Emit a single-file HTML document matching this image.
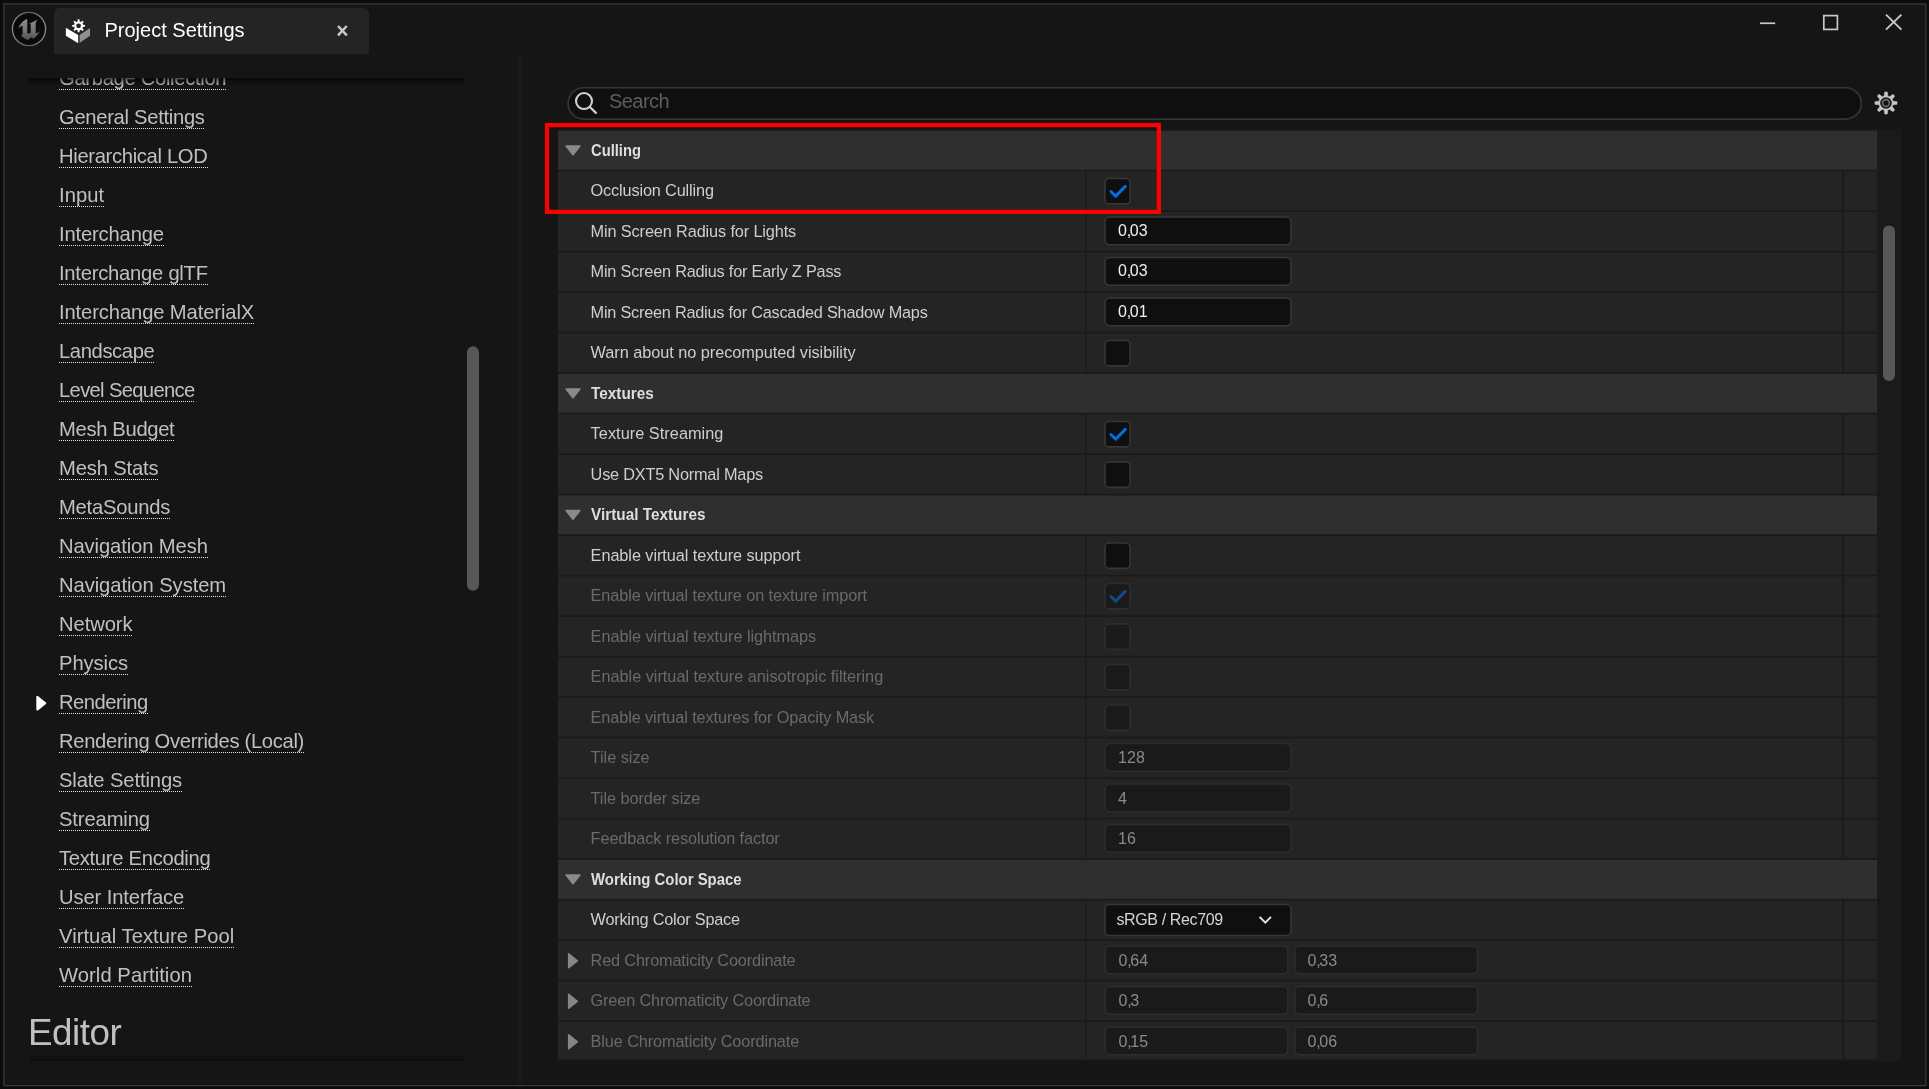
<!DOCTYPE html>
<html lang="en"><head><meta charset="utf-8"><title>Project Settings</title>
<style>
html,body{margin:0;padding:0;}
body{width:1929px;height:1089px;overflow:hidden;background:#0b0b0b;font-family:"Liberation Sans", Arial, sans-serif;position:relative;}
.abs{position:absolute;}
#win{position:absolute;left:3px;top:3px;width:1923.4px;height:1083.3px;background:#151515;}
#text{position:absolute;left:0;top:0;width:1929px;height:1089px;will-change:transform;}
#bg{position:absolute;left:0;top:0;width:1929px;height:1089px;}
#tab{position:absolute;left:54px;top:8px;width:315px;height:46px;background:#242424;border-radius:6px 6px 0 0;}
#tabtitle{position:absolute;left:104.5px;top:17px;font-size:20px;line-height:26px;color:#fff;white-space:nowrap;}
.side{position:absolute;left:29px;font-size:20.2px;line-height:26px;height:26px;color:#c0c0c0;white-space:nowrap;}
.side::after{content:'';position:absolute;left:0;right:0;top:24px;height:1px;background:repeating-linear-gradient(to right,#e6e6e6 0,#e6e6e6 1px,rgba(0,0,0,0) 1px,rgba(0,0,0,0) 2px);}
#sidebar{position:absolute;left:30px;top:78px;width:434px;height:930px;overflow:hidden;}
#editor{position:absolute;left:28.0px;top:1011px;font-size:36.8px;line-height:44px;color:#c0c0c0;white-space:nowrap;letter-spacing:-0.45px;}
#search{position:absolute;left:609px;top:87px;font-size:20px;line-height:28px;color:#5d5d5d;white-space:nowrap;letter-spacing:-0.55px;}
.nm{position:absolute;left:590.6px;font-size:16.3px;line-height:20px;height:20px;color:#cecece;white-space:nowrap;}
.nm.d{color:#6a6a6a;}
.hd{position:absolute;left:590.6px;transform-origin:0 50%;font-size:16.6px;line-height:20px;height:20px;color:#dedede;font-weight:700;white-space:nowrap;}
.val{position:absolute;font-size:16px;line-height:20px;height:20px;color:#f0f0f0;white-space:nowrap;letter-spacing:0.1px;}
.val.d{color:#8a8a8a;}
.val i{font-style:normal;letter-spacing:-1.5px;margin-left:-0.2px;}
.val.dd{color:#d6d6d6;letter-spacing:-0.38px;}
</style></head>
<body>
<div id="win"></div>
<svg id="bg" width="1929" height="1089" viewBox="0 0 1929 1089">
<defs>
<linearGradient id="ug" x1="0" y1="0" x2="0" y2="1"><stop offset="0" stop-color="#8c8e8e"/><stop offset="0.55" stop-color="#737575"/><stop offset="1" stop-color="#4e5050"/></linearGradient>
<linearGradient id="ring" x1="0" y1="0" x2="1" y2="0"><stop offset="0" stop-color="#8a8a8a"/><stop offset="0.5" stop-color="#5e5e5e"/><stop offset="1" stop-color="#8a8a8a"/></linearGradient>
<linearGradient id="shT" x1="0" y1="0" x2="0" y2="1"><stop offset="0" stop-color="#000" stop-opacity="0.6"/><stop offset="1" stop-color="#000" stop-opacity="0"/></linearGradient>
<linearGradient id="shB" x1="0" y1="0" x2="0" y2="1"><stop offset="0" stop-color="#000" stop-opacity="0"/><stop offset="1" stop-color="#000" stop-opacity="0.45"/></linearGradient>
</defs>
<path d="M3 3 H1926.5 V5 H5 V1086.3 H3Z" fill="#2b2b2b"/><path d="M1925.3 5 H1926.5 V1086.3 H5 V1085.1 H1925.3Z" fill="#393939"/>
<rect x="518" y="54" width="4" height="1030" fill="#1a1a1a"/>
<rect x="558" y="129" width="1343" height="932" fill="#1a1a1a"/>
<rect x="558" y="131" width="1319" height="38.8" fill="#2f2f2f"/>
<rect x="558" y="171.5" width="527.2" height="38.8" fill="#242424"/>
<rect x="1086.3" y="171.5" width="756" height="38.8" fill="#242424"/>
<rect x="1844" y="171.5" width="33" height="38.8" fill="#242424"/>
<rect x="558" y="212" width="527.2" height="38.8" fill="#242424"/>
<rect x="1086.3" y="212" width="756" height="38.8" fill="#242424"/>
<rect x="1844" y="212" width="33" height="38.8" fill="#242424"/>
<rect x="558" y="252.5" width="527.2" height="38.8" fill="#242424"/>
<rect x="1086.3" y="252.5" width="756" height="38.8" fill="#242424"/>
<rect x="1844" y="252.5" width="33" height="38.8" fill="#242424"/>
<rect x="558" y="293" width="527.2" height="38.8" fill="#242424"/>
<rect x="1086.3" y="293" width="756" height="38.8" fill="#242424"/>
<rect x="1844" y="293" width="33" height="38.8" fill="#242424"/>
<rect x="558" y="333.5" width="527.2" height="38.8" fill="#242424"/>
<rect x="1086.3" y="333.5" width="756" height="38.8" fill="#242424"/>
<rect x="1844" y="333.5" width="33" height="38.8" fill="#242424"/>
<rect x="558" y="374" width="1319" height="38.8" fill="#2f2f2f"/>
<rect x="558" y="414.5" width="527.2" height="38.8" fill="#242424"/>
<rect x="1086.3" y="414.5" width="756" height="38.8" fill="#242424"/>
<rect x="1844" y="414.5" width="33" height="38.8" fill="#242424"/>
<rect x="558" y="455" width="527.2" height="38.8" fill="#242424"/>
<rect x="1086.3" y="455" width="756" height="38.8" fill="#242424"/>
<rect x="1844" y="455" width="33" height="38.8" fill="#242424"/>
<rect x="558" y="495.5" width="1319" height="38.8" fill="#2f2f2f"/>
<rect x="558" y="536" width="527.2" height="38.8" fill="#242424"/>
<rect x="1086.3" y="536" width="756" height="38.8" fill="#242424"/>
<rect x="1844" y="536" width="33" height="38.8" fill="#242424"/>
<rect x="558" y="576.5" width="527.2" height="38.8" fill="#242424"/>
<rect x="1086.3" y="576.5" width="756" height="38.8" fill="#242424"/>
<rect x="1844" y="576.5" width="33" height="38.8" fill="#242424"/>
<rect x="558" y="617" width="527.2" height="38.8" fill="#242424"/>
<rect x="1086.3" y="617" width="756" height="38.8" fill="#242424"/>
<rect x="1844" y="617" width="33" height="38.8" fill="#242424"/>
<rect x="558" y="657.5" width="527.2" height="38.8" fill="#242424"/>
<rect x="1086.3" y="657.5" width="756" height="38.8" fill="#242424"/>
<rect x="1844" y="657.5" width="33" height="38.8" fill="#242424"/>
<rect x="558" y="698" width="527.2" height="38.8" fill="#242424"/>
<rect x="1086.3" y="698" width="756" height="38.8" fill="#242424"/>
<rect x="1844" y="698" width="33" height="38.8" fill="#242424"/>
<rect x="558" y="738.5" width="527.2" height="38.8" fill="#242424"/>
<rect x="1086.3" y="738.5" width="756" height="38.8" fill="#242424"/>
<rect x="1844" y="738.5" width="33" height="38.8" fill="#242424"/>
<rect x="558" y="779" width="527.2" height="38.8" fill="#242424"/>
<rect x="1086.3" y="779" width="756" height="38.8" fill="#242424"/>
<rect x="1844" y="779" width="33" height="38.8" fill="#242424"/>
<rect x="558" y="819.5" width="527.2" height="38.8" fill="#242424"/>
<rect x="1086.3" y="819.5" width="756" height="38.8" fill="#242424"/>
<rect x="1844" y="819.5" width="33" height="38.8" fill="#242424"/>
<rect x="558" y="860" width="1319" height="38.8" fill="#2f2f2f"/>
<rect x="558" y="900.5" width="527.2" height="38.8" fill="#242424"/>
<rect x="1086.3" y="900.5" width="756" height="38.8" fill="#242424"/>
<rect x="1844" y="900.5" width="33" height="38.8" fill="#242424"/>
<rect x="558" y="941" width="527.2" height="38.8" fill="#242424"/>
<rect x="1086.3" y="941" width="756" height="38.8" fill="#242424"/>
<rect x="1844" y="941" width="33" height="38.8" fill="#242424"/>
<rect x="558" y="981.5" width="527.2" height="38.8" fill="#242424"/>
<rect x="1086.3" y="981.5" width="756" height="38.8" fill="#242424"/>
<rect x="1844" y="981.5" width="33" height="38.8" fill="#242424"/>
<rect x="558" y="1022" width="527.2" height="37" fill="#242424"/>
<rect x="1086.3" y="1022" width="756" height="37" fill="#242424"/>
<rect x="1844" y="1022" width="33" height="37" fill="#242424"/>
<path d="M566.10 146.10 L579.90 146.10 L573.00 154.70Z" fill="#8a8a8a" stroke="#8a8a8a" stroke-width="1.6" stroke-linejoin="round"/>
<path d="M566.10 389.10 L579.90 389.10 L573.00 397.70Z" fill="#8a8a8a" stroke="#8a8a8a" stroke-width="1.6" stroke-linejoin="round"/>
<path d="M566.10 510.60 L579.90 510.60 L573.00 519.20Z" fill="#8a8a8a" stroke="#8a8a8a" stroke-width="1.6" stroke-linejoin="round"/>
<path d="M566.10 875.10 L579.90 875.10 L573.00 883.70Z" fill="#8a8a8a" stroke="#8a8a8a" stroke-width="1.6" stroke-linejoin="round"/>
<path d="M568.70 953.90 L568.70 967.70 L577.30 960.80Z" fill="#868686" stroke="#868686" stroke-width="1.6" stroke-linejoin="round"/>
<path d="M568.70 994.40 L568.70 1008.20 L577.30 1001.30Z" fill="#868686" stroke="#868686" stroke-width="1.6" stroke-linejoin="round"/>
<path d="M568.70 1034.90 L568.70 1048.70 L577.30 1041.80Z" fill="#868686" stroke="#868686" stroke-width="1.6" stroke-linejoin="round"/>
<rect x="1105" y="178.5" width="25.1" height="25.4" rx="4.2" fill="#0f0f0f" stroke="#373737" stroke-width="1.6"/><path d="M1110.9 191.5 L1115.7 196.1 L1125.3 186.4" fill="none" stroke="#0070e0" stroke-width="3.0" stroke-linecap="round" stroke-linejoin="round"/>
<rect x="1105" y="217" width="186" height="27.8" rx="4.8" fill="#0f0f0f" stroke="#373737" stroke-width="1.5"/>
<rect x="1105" y="257.5" width="186" height="27.8" rx="4.8" fill="#0f0f0f" stroke="#373737" stroke-width="1.5"/>
<rect x="1105" y="298" width="186" height="27.8" rx="4.8" fill="#0f0f0f" stroke="#373737" stroke-width="1.5"/>
<rect x="1105" y="340.5" width="25.1" height="25.4" rx="4.2" fill="#0f0f0f" stroke="#373737" stroke-width="1.6"/>
<rect x="1105" y="421.5" width="25.1" height="25.4" rx="4.2" fill="#0f0f0f" stroke="#373737" stroke-width="1.6"/><path d="M1110.9 434.5 L1115.7 439.1 L1125.3 429.4" fill="none" stroke="#0070e0" stroke-width="3.0" stroke-linecap="round" stroke-linejoin="round"/>
<rect x="1105" y="462" width="25.1" height="25.4" rx="4.2" fill="#0f0f0f" stroke="#373737" stroke-width="1.6"/>
<rect x="1105" y="543" width="25.1" height="25.4" rx="4.2" fill="#0f0f0f" stroke="#373737" stroke-width="1.6"/>
<rect x="1105" y="583.5" width="25.1" height="25.4" rx="4.2" fill="#1a1a1a" stroke="#2e2e2e" stroke-width="1.6"/><path d="M1110.9 596.5 L1115.7 601.1 L1125.3 591.4" fill="none" stroke="#124a85" stroke-width="3.0" stroke-linecap="round" stroke-linejoin="round"/>
<rect x="1105" y="624" width="25.1" height="25.4" rx="4.2" fill="#1a1a1a" stroke="#2e2e2e" stroke-width="1.6"/>
<rect x="1105" y="664.5" width="25.1" height="25.4" rx="4.2" fill="#1a1a1a" stroke="#2e2e2e" stroke-width="1.6"/>
<rect x="1105" y="705" width="25.1" height="25.4" rx="4.2" fill="#1a1a1a" stroke="#2e2e2e" stroke-width="1.6"/>
<rect x="1105" y="743.5" width="186" height="27.8" rx="4.8" fill="#1a1a1a" stroke="#2d2d2d" stroke-width="1.5"/>
<rect x="1105" y="784" width="186" height="27.8" rx="4.8" fill="#1a1a1a" stroke="#2d2d2d" stroke-width="1.5"/>
<rect x="1105" y="824.5" width="186" height="27.8" rx="4.8" fill="#1a1a1a" stroke="#2d2d2d" stroke-width="1.5"/>
<rect x="1105" y="904.5" width="186" height="31" rx="4.8" fill="#0f0f0f" stroke="#373737" stroke-width="1.5"/>
<path d="M1259.6 916.9 L1265.3 922.6 L1271 916.9" fill="none" stroke="#e4e4e4" stroke-width="2" stroke-linecap="butt" stroke-linejoin="miter"/>
<rect x="1105.3" y="946" width="182.5" height="27.8" rx="4.8" fill="#1a1a1a" stroke="#2d2d2d" stroke-width="1.5"/>
<rect x="1295" y="946" width="182.5" height="27.8" rx="4.8" fill="#1a1a1a" stroke="#2d2d2d" stroke-width="1.5"/>
<rect x="1105.3" y="986.5" width="182.5" height="27.8" rx="4.8" fill="#1a1a1a" stroke="#2d2d2d" stroke-width="1.5"/>
<rect x="1295" y="986.5" width="182.5" height="27.8" rx="4.8" fill="#1a1a1a" stroke="#2d2d2d" stroke-width="1.5"/>
<rect x="1105.3" y="1027" width="182.5" height="27.8" rx="4.8" fill="#1a1a1a" stroke="#2d2d2d" stroke-width="1.5"/>
<rect x="1295" y="1027" width="182.5" height="27.8" rx="4.8" fill="#1a1a1a" stroke="#2d2d2d" stroke-width="1.5"/>
<rect x="1883" y="225.5" width="12" height="155.5" rx="6" fill="#575757"/>
<rect x="467" y="346.3" width="12" height="244.5" rx="6" fill="#575757"/>
<rect x="568.1" y="87.75" width="1293.2" height="31.3" rx="15.65" fill="#0f0f0f" stroke="#353535" stroke-width="1.7"/>
<circle cx="584.0" cy="101.05" r="8.0" fill="none" stroke="#d0d0d0" stroke-width="2.1"/><path d="M589.9 107.0 L595.9 112.9" stroke="#d0d0d0" stroke-width="2.2" stroke-linecap="round"/>
<path d="M1884.24 95.92 L1884.78 91.97 L1887.22 91.97 L1887.76 95.92 L1889.77 96.75 L1892.94 94.34 L1894.66 96.06 L1892.25 99.23 L1893.08 101.24 L1897.03 101.78 L1897.03 104.22 L1893.08 104.76 L1892.25 106.77 L1894.66 109.94 L1892.94 111.66 L1889.77 109.25 L1887.76 110.08 L1887.22 114.03 L1884.78 114.03 L1884.24 110.08 L1882.23 109.25 L1879.06 111.66 L1877.34 109.94 L1879.75 106.77 L1878.92 104.76 L1874.97 104.22 L1874.97 101.78 L1878.92 101.24 L1879.75 99.23 L1877.34 96.06 L1879.06 94.34 L1882.23 96.75Z" fill="#c6c6c6" stroke="#c6c6c6" stroke-width="0.6" stroke-linejoin="round"/><circle cx="1886" cy="103" r="5.8" fill="#151515"/><circle cx="1886" cy="103" r="3.4" fill="none" stroke="#6e6e6e" stroke-width="1.6"/>
<rect x="1760" y="22.4" width="15.2" height="1.7" fill="#c8c8c8"/>
<rect x="1823.8" y="15.6" width="13.6" height="13.8" fill="none" stroke="#c8c8c8" stroke-width="1.7"/>
<path d="M1886 14.6 L1901.4 29.6 M1901.4 14.6 L1886 29.6" stroke="#c8c8c8" stroke-width="1.9" fill="none"/>
<circle cx="29" cy="29" r="16.6" fill="#0a0a0a" stroke="url(#ring)" stroke-width="1.3"/>
<g transform="translate(8 8) scale(0.038565)"><path fill="url(#ug)" d="M490 285 C400 320 300 420 265 545 C300 490 340 465 378 470 L378 680 C378 700 360 708 335 712 C400 780 470 815 525 830 L600 760 L655 800 C730 740 790 670 822 600 C790 635 750 655 718 650 L718 410 C718 370 740 330 772 298 C700 330 640 370 590 390 L555 380 C580 400 590 420 590 440 L590 640 C560 660 530 665 500 655 L500 330 C500 310 495 295 490 285Z"/></g>
<path d="M54 54 L54 14 Q54 8 60 8 L363 8 Q369 8 369 14 L369 54Z" fill="#242424"/>
<path d="M65.9 27.7 L78.2 35.1 L78.2 43.2 L65.9 35.8Z" fill="#ffffff"/>
<path d="M79.6 35.1 L90 28.1 L90 35.8 L79.6 42.9Z" fill="#8f8f8f"/>
<path d="M77.55 21.42 L77.73 19.36 L79.47 19.36 L79.65 21.42 L80.95 21.96 L82.54 20.63 L83.77 21.86 L82.44 23.45 L82.98 24.75 L85.04 24.93 L85.04 26.67 L82.98 26.85 L82.44 28.15 L83.77 29.74 L82.54 30.97 L80.95 29.64 L79.65 30.18 L79.47 32.24 L77.73 32.24 L77.55 30.18 L76.25 29.64 L74.66 30.97 L73.43 29.74 L74.76 28.15 L74.22 26.85 L72.16 26.67 L72.16 24.93 L74.22 24.75 L74.76 23.45 L73.43 21.86 L74.66 20.63 L76.25 21.96Z" fill="#ffffff"/><circle cx="78.6" cy="25.8" r="2.4" fill="#242424"/>
<path d="M338 26 L346.8 35.4 M346.8 26 L338 35.4" stroke="#c8c8c8" stroke-width="2.5" fill="none"/>
<path d="M37.3 696.8 L37.3 709.6 L45.3 703.2Z" fill="#ffffff" stroke="#ffffff" stroke-width="2" stroke-linejoin="round"/>
</svg>
<div id="text">
<div id="tabtitle">Project Settings</div>
<div id="sidebar">
<div class="side" style="top:-13px;letter-spacing:-0.307px;">Garbage Collection</div>
<div class="side" style="top:26px;letter-spacing:-0.298px;">General Settings</div>
<div class="side" style="top:65px;letter-spacing:-0.325px;">Hierarchical LOD</div>
<div class="side" style="top:104px;letter-spacing:0.059px;">Input</div>
<div class="side" style="top:143px;letter-spacing:-0.158px;">Interchange</div>
<div class="side" style="top:182px;letter-spacing:-0.238px;">Interchange glTF</div>
<div class="side" style="top:221px;letter-spacing:-0.114px;">Interchange MaterialX</div>
<div class="side" style="top:260px;letter-spacing:-0.376px;">Landscape</div>
<div class="side" style="top:299px;letter-spacing:-0.664px;">Level Sequence</div>
<div class="side" style="top:338px;letter-spacing:-0.324px;">Mesh Budget</div>
<div class="side" style="top:377px;letter-spacing:-0.148px;">Mesh Stats</div>
<div class="side" style="top:416px;letter-spacing:-0.226px;">MetaSounds</div>
<div class="side" style="top:455px;letter-spacing:-0.105px;">Navigation Mesh</div>
<div class="side" style="top:494px;letter-spacing:-0.071px;">Navigation System</div>
<div class="side" style="top:533px;letter-spacing:-0.078px;">Network</div>
<div class="side" style="top:572px;letter-spacing:-0.080px;">Physics</div>
<div class="side" style="top:611px;letter-spacing:-0.484px;">Rendering</div>
<div class="side" style="top:650px;letter-spacing:-0.318px;">Rendering Overrides (Local)</div>
<div class="side" style="top:689px;letter-spacing:-0.113px;">Slate Settings</div>
<div class="side" style="top:728px;letter-spacing:-0.124px;">Streaming</div>
<div class="side" style="top:767px;letter-spacing:-0.287px;">Texture Encoding</div>
<div class="side" style="top:806px;letter-spacing:-0.114px;">User Interface</div>
<div class="side" style="top:845px;letter-spacing:0.049px;">Virtual Texture Pool</div>
<div class="side" style="top:884px;letter-spacing:0.065px;">World Partition</div>
</div>
<div id="editor">Editor</div>
<div id="search">Search</div>
<div class="hd" style="top:140.8px;transform:scaleX(0.8883)">Culling</div>
<div class="nm" style="top:180.0px;letter-spacing:-0.150px;">Occlusion Culling</div>
<div class="nm" style="top:221.0px;letter-spacing:-0.126px;">Min Screen Radius for Lights</div>
<div class="val" style="left:1118px;top:221.4px">0<i>,</i>03</div>
<div class="nm" style="top:261.0px;letter-spacing:-0.212px;">Min Screen Radius for Early Z Pass</div>
<div class="val" style="left:1118px;top:261.4px">0<i>,</i>03</div>
<div class="nm" style="top:302.0px;letter-spacing:-0.229px;">Min Screen Radius for Cascaded Shadow Maps</div>
<div class="val" style="left:1118px;top:302.4px">0<i>,</i>01</div>
<div class="nm" style="top:342.0px;letter-spacing:-0.040px;">Warn about no precomputed visibility</div>
<div class="hd" style="top:383.8px;transform:scaleX(0.9249)">Textures</div>
<div class="nm" style="top:423.0px;letter-spacing:0.044px;">Texture Streaming</div>
<div class="nm" style="top:464.0px;letter-spacing:-0.205px;">Use DXT5 Normal Maps</div>
<div class="hd" style="top:504.8px;transform:scaleX(0.9241)">Virtual Textures</div>
<div class="nm" style="top:545.0px;letter-spacing:-0.066px;">Enable virtual texture support</div>
<div class="nm d" style="top:585.0px;letter-spacing:-0.082px;">Enable virtual texture on texture import</div>
<div class="nm d" style="top:626.0px;letter-spacing:-0.048px;">Enable virtual texture lightmaps</div>
<div class="nm d" style="top:666.0px;letter-spacing:-0.014px;">Enable virtual texture anisotropic filtering</div>
<div class="nm d" style="top:707.0px;letter-spacing:-0.105px;">Enable virtual textures for Opacity Mask</div>
<div class="nm d" style="top:747.0px;letter-spacing:-0.013px;">Tile size</div>
<div class="val d" style="left:1118px;top:747.5px">128</div>
<div class="nm d" style="top:788.0px;letter-spacing:-0.060px;">Tile border size</div>
<div class="val d" style="left:1118px;top:788.5px">4</div>
<div class="nm d" style="top:828.0px;letter-spacing:-0.108px;">Feedback resolution factor</div>
<div class="val d" style="left:1118px;top:828.5px">16</div>
<div class="hd" style="top:869.8px;transform:scaleX(0.8992)">Working Color Space</div>
<div class="nm" style="top:909.0px;letter-spacing:-0.228px;">Working Color Space</div>
<div class="val dd" style="left:1116.5px;top:909.5px">sRGB / Rec709</div>
<div class="nm d" style="top:950.0px;letter-spacing:-0.154px;">Red Chromaticity Coordinate</div>
<div class="val d" style="left:1118.5px;top:950.5px">0<i>,</i>64</div>
<div class="val d" style="left:1307.5px;top:950.5px">0<i>,</i>33</div>
<div class="nm d" style="top:990.0px;letter-spacing:-0.157px;">Green Chromaticity Coordinate</div>
<div class="val d" style="left:1118.5px;top:990.5px">0<i>,</i>3</div>
<div class="val d" style="left:1307.5px;top:990.5px">0<i>,</i>6</div>
<div class="nm d" style="top:1031.0px;letter-spacing:-0.115px;">Blue Chromaticity Coordinate</div>
<div class="val d" style="left:1118.5px;top:1031.5px">0<i>,</i>15</div>
<div class="val d" style="left:1307.5px;top:1031.5px">0<i>,</i>06</div>
</div>
<svg class="abs" style="left:0;top:0" width="1929" height="1089" viewBox="0 0 1929 1089"><rect x="29" y="78" width="435" height="7.5" fill="url(#shT)"/><rect x="30" y="1054" width="434" height="7" fill="url(#shB)"/><rect x="547.1" y="125.05" width="611.75" height="86.85" fill="none" stroke="#ff0000" stroke-width="4.2"/></svg>
</body></html>
